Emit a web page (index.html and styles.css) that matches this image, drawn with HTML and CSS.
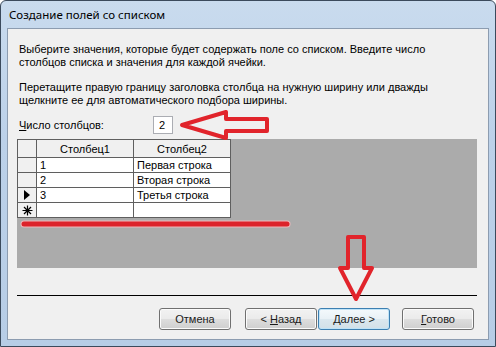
FILE: index.html
```html
<!DOCTYPE html>
<html lang="ru">
<head>
  <meta charset="UTF-8" />
  <meta name="viewport" content="width=device-width, initial-scale=1.0"/>
  <title>Создание полей со списком</title>
  <link rel="stylesheet" href="styles.css">
</head>
<body>

  <div class="window">
    <div class="titlebar">Создание полей со списком</div>

    <div class="client">
      <p class="intro">Выберите значения, которые будет содержать поле со списком. Введите число столбцов списка и значения для каждой ячейки.</p>
      <p class="intro">Перетащите правую границу заголовка столбца на нужную ширину или дважды щелкните ее для автоматического подбора ширины.</p>

      <div class="count-row">
        <span class="count-label"><u>Ч</u>исло столбцов:</span>
        <span class="count-box">2</span>
      </div>

      <div class="grid-area">
        <table class="sheet">
          <tr class="head">
            <th class="sel"></th>
            <th class="col">Столбец1</th>
            <th class="col">Столбец2</th>
          </tr>
          <tr>
            <td class="sel"></td>
            <td>1</td>
            <td>Первая строка</td>
          </tr>
          <tr>
            <td class="sel"></td>
            <td>2</td>
            <td>Вторая строка</td>
          </tr>
          <tr>
            <td class="sel">
              <svg class="mark" width="8" height="10" viewBox="0 0 8 10">
                <polygon points="1,0 7,5 1,10" fill="#000"/>
              </svg>
            </td>
            <td>3</td>
            <td>Третья строка</td>
          </tr>
          <tr>
            <td class="sel">
              <svg class="mark" width="11" height="11" viewBox="0 0 11 11">
                <path d="M5.5 0.5V10.5M0.5 5.5H10.5M2 2L9 9M9 2L2 9" stroke="#000" stroke-width="1.2"/>
              </svg>
            </td>
            <td></td>
            <td></td>
          </tr>
        </table>
      </div>

      <div class="sep"></div>

      <div class="buttons">
        <button class="btn cancel">Отмена</button>
        <button class="btn">&lt; <u>Н</u>азад</button>
        <button class="btn default"><u>Д</u>алее &gt;</button>
        <button class="btn finish"><u>Г</u>отово</button>
      </div>
    </div>

    <!-- red marks drawn over the dialog -->
    <svg class="marks" width="496" height="347" viewBox="0 0 496 347">
      <polygon points="182,125 226,112 226,119 267,119 267,131 226,131 226,138"
               fill="none" stroke="#e1242b" stroke-width="4" stroke-linejoin="round"/>
      <polygon points="348,237 364,237 364,268 372,268 356,299 340,268 348,268"
               fill="none" stroke="#e1242b" stroke-width="4" stroke-linejoin="round"/>
      <line x1="24" y1="224" x2="287" y2="224" stroke="#f0b8bb" stroke-width="7" stroke-linecap="round"/>
      <line x1="24" y1="224" x2="287" y2="224" stroke="#dc232b" stroke-width="5" stroke-linecap="round"/>
    </svg>
  </div>

</body>
</html>
```

FILE: styles.css
```css
body {
  margin: 0;
  font-family: "Liberation Sans", Arial, sans-serif;
  font-size: 11px;
  color: #000;
  background: #fff;
}

.window {
  position: relative;
  width: 496px;
  height: 347px;
  box-sizing: border-box;
  border: 1px solid #3b4a5c;
  border-radius: 6px 6px 0 0;
  padding: 0 6px 6px 6px;
  display: flex;
  flex-direction: column;
  background: linear-gradient(to bottom, #c9dbee 0%, #bcd1e9 40%, #b7cde6 100%);
}

.titlebar {
  height: 27px;
  line-height: 27px;
  padding-left: 2px;
  font-family: "Noto Sans", "DejaVu Sans", sans-serif;
  font-size: 11.5px;
  color: #000;
}

.client {
  flex: 1;
  border: 1px solid #8c9cb0;
  background-color: #f0f0f0;
  padding: 0 11px 0 9px;
  display: flex;
  flex-direction: column;
}

.intro {
  width: 420px;
  margin: 14px 0 0 0;
  padding-left: 2px;
  line-height: 13px;
}

.intro + .intro {
  margin-top: 12px;
}

.count-row {
  display: flex;
  align-items: center;
  margin-top: 9px;
  padding-left: 2px;
  height: 18px;
}

.count-label {
  width: 134px;
}

.count-box {
  width: 13px;
  height: 16px;
  line-height: 16px;
  padding-left: 5px;
  background: #fff;
  border: 1px solid #abadb3;
}

.grid-area {
  margin-top: 5px;
  height: 129px;
  background-color: #ababab;
}

.sheet {
  border-collapse: collapse;
  background: #fff;
}

.sheet th,
.sheet td {
  border: 1px solid #5f5f5f;
  padding: 0 0 0 3px;
  height: 14px;
  line-height: 14px;
  font-weight: normal;
  text-align: left;
  white-space: nowrap;
}

.sheet .head th {
  height: 17px;
  background-color: #f0f0f0;
  text-align: center;
  padding: 0;
}

.sheet .col {
  width: 96px;
}

.sheet .sel {
  width: 18px;
  padding: 0;
  background-color: #f0f0f0;
}

.mark {
  display: block;
  margin: 0 auto;
}

.sep {
  margin-top: 27px;
  border-top: 1px solid #000;
}

.buttons {
  display: flex;
  justify-content: flex-end;
  margin-top: 12px;
  padding-right: 3px;
}

.btn {
  width: 72px;
  height: 22px;
  padding: 0;
  margin: 0;
  font-family: "Liberation Sans", Arial, sans-serif;
  font-size: 11px;
  font-weight: normal;
  color: #1a1a1a;
  border: 1px solid #707070;
  border-radius: 3px;
  background: linear-gradient(to bottom, #f2f2f2 0%, #ebebeb 48%, #dddddd 52%, #cfcfcf 100%);
  box-shadow: inset 0 0 0 1px #fbfbfb;
}

.btn.cancel {
  margin-right: 14px;
}

.btn.default {
  margin-left: 1px;
  border-color: #3c7fb1;
  background: linear-gradient(to bottom, #f4f9fc 0%, #e9f1f6 48%, #dbe7ee 52%, #d2e0e8 100%);
  box-shadow: inset 0 0 0 1px #bfe3f7;
}

.btn.finish {
  margin-left: 12px;
}

.marks {
  position: absolute;
  left: -1px;
  top: -1px;
  pointer-events: none;
}
```
